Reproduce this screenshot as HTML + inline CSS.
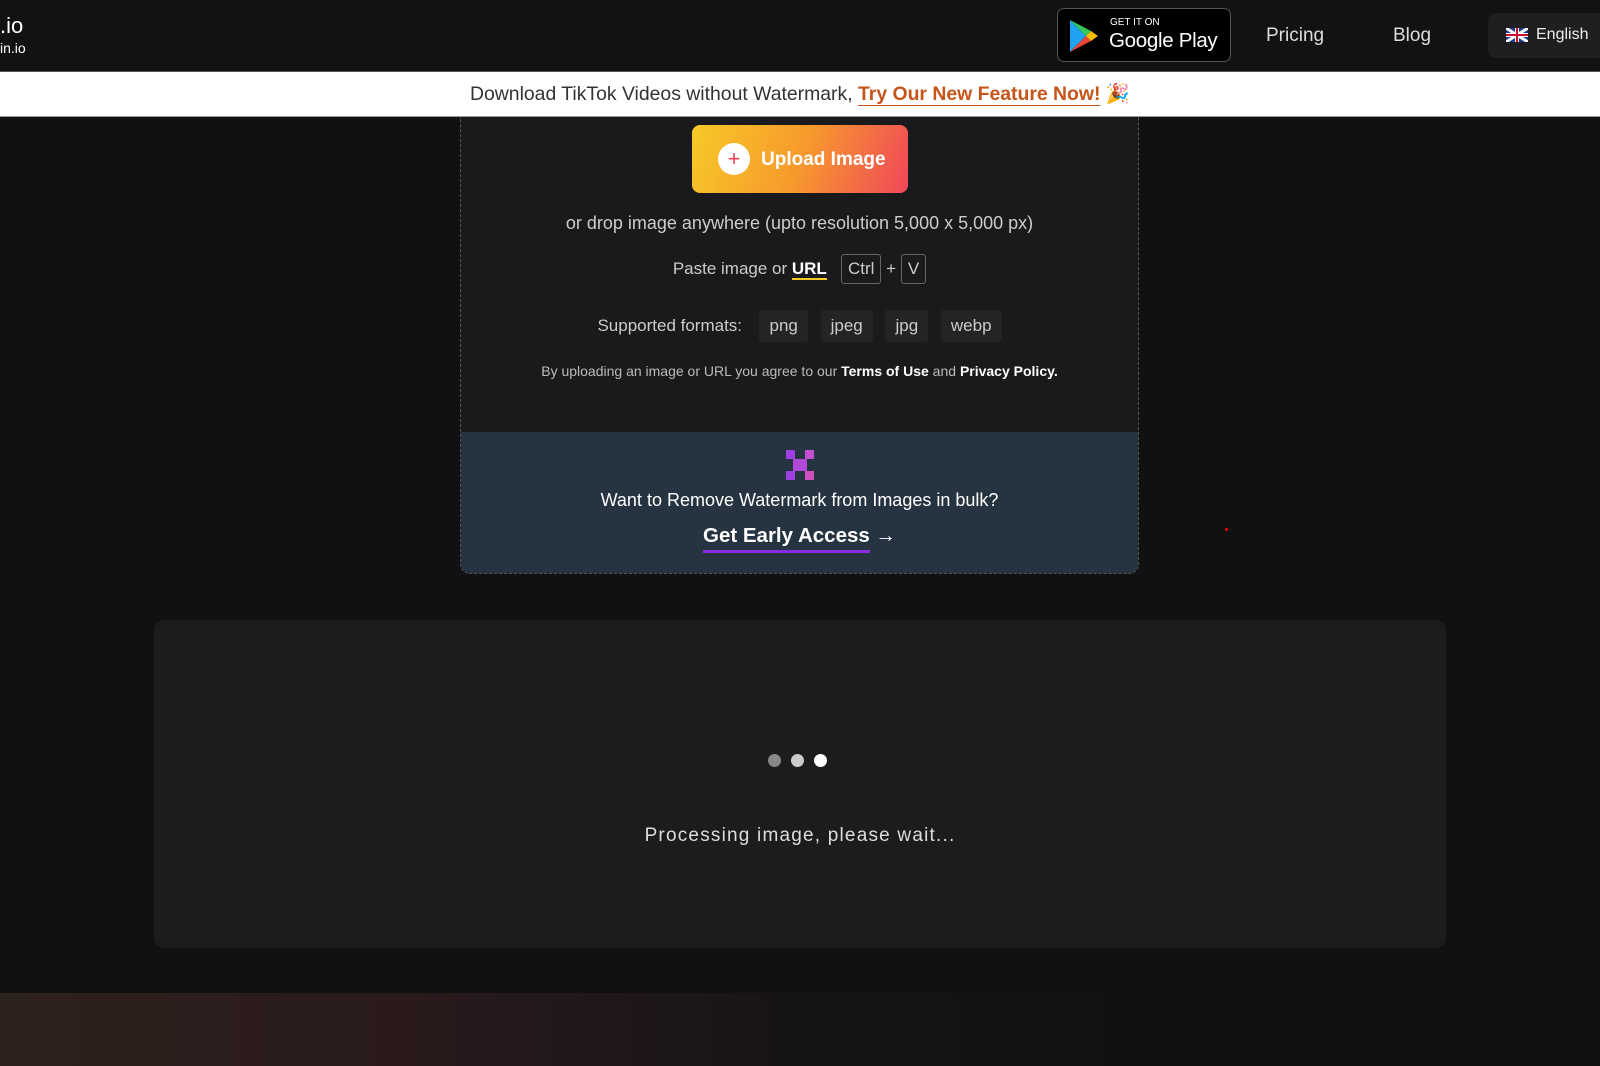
<!DOCTYPE html>
<html><head><meta charset="utf-8"><style>
*{margin:0;padding:0;box-sizing:border-box}
body{width:1600px;height:1066px;overflow:hidden;background:#111113;font-family:"Liberation Sans",sans-serif;color:#ddd;position:relative}
.hdr{position:absolute;left:0;top:0;width:1600px;height:72px;background:#121212;border-bottom:1px solid #555}
.abs{position:absolute}
.banner{position:absolute;top:72px;left:0;width:1600px;height:45px;background:#fff;border-bottom:1px solid #999;text-align:center;font-size:19.4px;line-height:45px;color:#333}
.banner b{color:#c7541a;font-weight:bold;text-decoration:underline;text-underline-offset:5px}
.box{position:absolute;left:460px;top:117px;width:679px;height:457px;background:#1a1a1c;border:1px dashed #555;border-top:none;border-radius:0 0 10px 10px;overflow:hidden}
.blue{position:absolute;left:0;top:315px;width:100%;height:142px;background:#263340}
.c{position:absolute;left:0;width:100%;text-align:center}
.kbd{display:inline-block;border:1px solid #666;border-radius:3px;padding:3px 6px;line-height:22px}
.fmt{display:inline-block;background:#242426;border-radius:3px;padding:0 10px;line-height:32px;margin-left:8px}
.panel{position:absolute;left:154px;top:620px;width:1292px;height:328px;background:#1c1c1e;border-radius:10px}
.dot{position:absolute;top:754px;width:13px;height:13px;border-radius:50%}
</style></head><body>
<div class="hdr">
 <div class="abs" style="left:0;top:13px;font-size:22px;color:#fff">.io</div>
 <div class="abs" style="left:0;top:40px;font-size:14px;color:#fff">in.io</div>
 <div class="abs" style="left:1057px;top:8px;width:174px;height:54px;background:#000;border:1px solid #555;border-radius:7px">
  <svg class="abs" style="left:10px;top:10px" width="32" height="34" viewBox="0 0 32 34"><path d="M2 1L18 17L2 33Z" fill="#1fa3f0"/><path d="M2 1L23 12L18 17Z" fill="#34c759"/><path d="M2 33L23 22L18 17Z" fill="#ea4335"/><path d="M23 12L30 17L23 22L18 17Z" fill="#fbbc04"/></svg>
  <div class="abs" style="left:52px;top:8px;font-size:10px;color:#fff">GET IT ON</div>
  <div class="abs" style="left:51px;top:20px;font-size:20.5px;color:#fff;letter-spacing:-0.3px">Google Play</div>
 </div>
 <div class="abs" style="left:1266px;top:25px;font-size:19px;color:#ddd">Pricing</div>
 <div class="abs" style="left:1393px;top:25px;font-size:19px;color:#ddd">Blog</div>
 <div class="abs" style="left:1488px;top:13px;width:120px;height:45px;background:#1f1f21;border-radius:8px">
  <svg class="abs" style="left:18px;top:15px" width="22" height="14" viewBox="0 0 22 14"><rect width="22" height="14" fill="#1a3a8a"/><path d="M0 0L22 14M22 0L0 14" stroke="#fff" stroke-width="3"/><path d="M11 0V14M0 7H22" stroke="#fff" stroke-width="4"/><path d="M11 0V14M0 7H22" stroke="#c8102e" stroke-width="2"/></svg>
  <div class="abs" style="left:48px;top:13px;font-size:16px;color:#eee">English</div>
 </div>
</div>
<div class="banner">Download TikTok Videos without Watermark, <b>Try Our New Feature Now!</b> <span style="color:#c7541a">🎉</span></div>
<div class="box">
 <div class="abs" style="left:231px;top:8px;width:216px;height:68px;border-radius:8px;background:linear-gradient(110deg,#f7c928,#f79a2c 50%,#f0475a)">
  <div class="abs" style="left:26px;top:18px;width:32px;height:32px;border-radius:50%;background:#fff;color:#ef4459;text-align:center;font-size:22px;line-height:31px">+</div>
  <div class="abs" style="left:69px;top:24px;font-size:19px;font-weight:bold;color:#fff">Upload Image</div>
 </div>
 <div class="c" style="top:96px;font-size:18px;color:#ccc">or drop image anywhere (upto resolution 5,000 x 5,000 px)</div>
 <div class="c" style="top:137px;font-size:17px;color:#ccc">Paste image or <b style="color:#fff;border-bottom:2px solid #f7c928">URL</b> &nbsp; <span class="kbd">Ctrl</span> + <span class="kbd">V</span></div>
 <div class="c" style="top:193px;font-size:17px;color:#ccc">Supported formats: &nbsp;<span class="fmt">png</span> <span class="fmt">jpeg</span> <span class="fmt">jpg</span> <span class="fmt">webp</span></div>
 <div class="c" style="top:246px;font-size:14px;color:#bbb">By uploading an image or URL you agree to our <b style="color:#fff">Terms of Use</b> and <b style="color:#fff">Privacy Policy.</b></div>
 <div class="blue">
  <svg class="abs" style="left:325px;top:18px" width="28" height="30" viewBox="0 0 28 30"><g fill="#a040e0"><rect x="0" y="0" width="9" height="9"/><rect x="19" y="0" width="9" height="9" fill="#c050d0"/><rect x="7" y="9" width="14" height="12" fill="#b048d8"/><rect x="0" y="21" width="9" height="9"/><rect x="19" y="21" width="9" height="9" fill="#d050c0"/></g></svg>
  <div class="c" style="top:58px;font-size:18px;color:#fff">Want to Remove Watermark from Images in bulk?</div>
  <div class="c" style="top:92px;font-size:20.5px;font-weight:bold;color:#fff"><span style="border-bottom:3px solid #8a2be2;padding-bottom:3px">Get Early Access</span> →</div>
 </div>
</div>
<div class="panel"></div>
<div class="dot" style="left:768px;background:#888"></div>
<div class="dot" style="left:791px;background:#ccc"></div>
<div class="dot" style="left:814px;background:#fff"></div>
<div class="abs" style="left:154px;width:1292px;top:825px;text-align:center;font-size:19px;color:#ddd;letter-spacing:1.2px">Processing image, please wait...</div>
<div class="abs" style="left:0;top:993px;width:1600px;height:73px;background:linear-gradient(90deg,#2e221c,#2a1a1c 25%,#161416 50%,#111113 70%)"></div>
<div class="abs" style="left:1225px;top:528px;width:3px;height:3px;background:#e00;border-radius:50%"></div>
</body></html>
